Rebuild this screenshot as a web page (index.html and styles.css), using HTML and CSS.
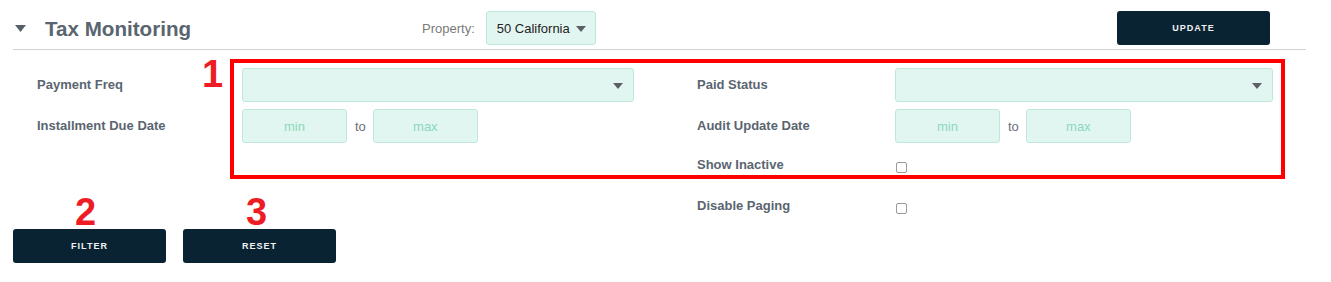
FILE: index.html
```html
<!DOCTYPE html>
<html lang="en">
<head>
  <meta charset="UTF-8" />
  <meta name="viewport" content="width=device-width, initial-scale=1" />
  <title>Tax Monitoring</title>
  <link rel="stylesheet" href="styles.css">
</head>
<body>

<header class="section-head">
  <div class="title-block">
    <svg class="toggle" width="11" height="7" viewBox="0 0 11 7"><path d="M0 0H11L5.5 7Z" fill="#56616b"/></svg>
    <h1>Tax Monitoring</h1>
  </div>
  <div class="property">
    <span class="property-label">Property:</span>
    <div class="select property-select">
      <span>50 California</span>
      <span class="caret"></span>
    </div>
  </div>
  <button class="btn btn-update">UPDATE</button>
</header>

<div class="filters">
  <div class="filter-grid">
    <label class="field-label">Payment Freq</label>
    <div class="select wide"><span></span><span class="caret"></span></div>
    <span></span>
    <label class="field-label">Paid Status</label>
    <div class="select wide"><span></span><span class="caret"></span></div>

    <label class="field-label">Installment Due Date</label>
    <div class="range">
      <input type="text" placeholder="min" />
      <span class="to">to</span>
      <input type="text" placeholder="max" />
    </div>
    <span></span>
    <label class="field-label">Audit Update Date</label>
    <div class="range">
      <input type="text" placeholder="min" />
      <span class="to">to</span>
      <input type="text" placeholder="max" />
    </div>

    <span></span><span></span><span></span>
    <label class="field-label check-label">Show Inactive</label>
    <div class="check"><input type="checkbox" /></div>

    <span></span><span></span><span></span>
    <label class="field-label check-label">Disable Paging</label>
    <div class="check"><input type="checkbox" /></div>
  </div>

  <div class="actions">
    <button class="btn">FILTER</button>
    <button class="btn">RESET</button>
  </div>

  <!-- annotations -->
  <div class="note-box"></div>
  <span class="note-num n1">1</span>
  <span class="note-num n2">2</span>
  <span class="note-num n3">3</span>
</div>

</body>
</html>
```

FILE: styles.css
```css
* {
  margin: 0;
  padding: 0;
  box-sizing: border-box;
}

body {
  font-family: 'Liberation Sans', Arial, sans-serif;
  background-color: #ffffff;
  color: #5a6570;
  padding: 0 25px 0 13px;
  width: 1331px;
}

.section-head {
  display: flex;
  align-items: center;
  height: 50px;
  padding: 11px 36px 4px 0;
  border-bottom: 1px solid #d2d2d2;
}

.title-block {
  width: 409px;
  display: flex;
  align-items: center;
  padding-top: 1px;
}

.toggle {
  margin-left: 2px;
  margin-right: 19px;
}

.section-head h1 {
  font-size: 20.6px;
  font-weight: bold;
  color: #5a6570;
}

.property {
  display: flex;
  align-items: center;
}

.property-label {
  font-size: 13px;
  color: #7a7a7a;
  margin-right: 11px;
}

.select {
  height: 34px;
  display: flex;
  align-items: center;
  justify-content: space-between;
  background: #e2f6f1;
  border: 1px solid #bfe8dd;
  border-radius: 3px;
  padding: 0 10px;
  font-size: 13px;
  color: #222;
  white-space: nowrap;
}

.property-select {
  width: 110px;
  padding-right: 11px;
}

.caret {
  width: 0;
  height: 0;
  border-left: 5px solid transparent;
  border-right: 5px solid transparent;
  border-top: 6px solid #5b6067;
  margin-top: 1px;
}

.property-select .caret {
  margin-left: 6px;
}

.wide {
  width: 100%;
  padding-right: 10px;
}

.btn {
  width: 153px;
  height: 34px;
  border: none;
  border-radius: 3px;
  background: #092333;
  color: #f2f2f2;
  font-family: 'Liberation Sans', Arial, sans-serif;
  font-size: 9px;
  font-weight: bold;
  letter-spacing: 1px;
  cursor: pointer;
}

.btn-update {
  margin-left: auto;
}

.filters {
  position: relative;
  padding-top: 18px;
}

.filter-grid {
  display: grid;
  grid-template-columns: 205px 392px 63px 198px 378px;
  grid-auto-rows: 34px;
  row-gap: 7px;
  margin-left: 24px;
  align-items: center;
}

.field-label {
  font-size: 13px;
  font-weight: bold;
  color: #5a6570;
  padding-bottom: 2px;
}

.check-label {
  padding-bottom: 5px;
}

.range {
  display: flex;
  align-items: center;
}

.range input {
  width: 105px;
  height: 34px;
  background: #e2f6f1;
  border: 1px solid #bfe8dd;
  border-radius: 3px;
  text-align: center;
  font-family: 'Liberation Sans', Arial, sans-serif;
  font-size: 13px;
  color: #222;
}

.range input::placeholder {
  color: #8ad8bd;
}

.to {
  font-size: 13px;
  color: #6a6f78;
  margin: 0 7px 0 8px;
}

.check {
  display: flex;
  align-items: center;
}

.check input {
  appearance: none;
  -webkit-appearance: none;
  width: 11px;
  height: 11px;
  border: 1px solid #9a9a9a;
  border-radius: 2px;
  background: #fff;
  margin-left: 1px;
}

.actions {
  display: flex;
  gap: 17px;
  margin-top: 4px;
}

.note-box {
  position: absolute;
  left: 217px;
  top: 9px;
  width: 1055px;
  height: 120px;
  border: 4px solid #fe0000;
}

.note-num {
  position: absolute;
  font-size: 38px;
  font-weight: bold;
  color: #ee1c25;
  line-height: 1;
}

.n1 { left: 189px; top: 5px; }
.n2 { left: 62px; top: 143px; }
.n3 { left: 233px; top: 143px; }
```
